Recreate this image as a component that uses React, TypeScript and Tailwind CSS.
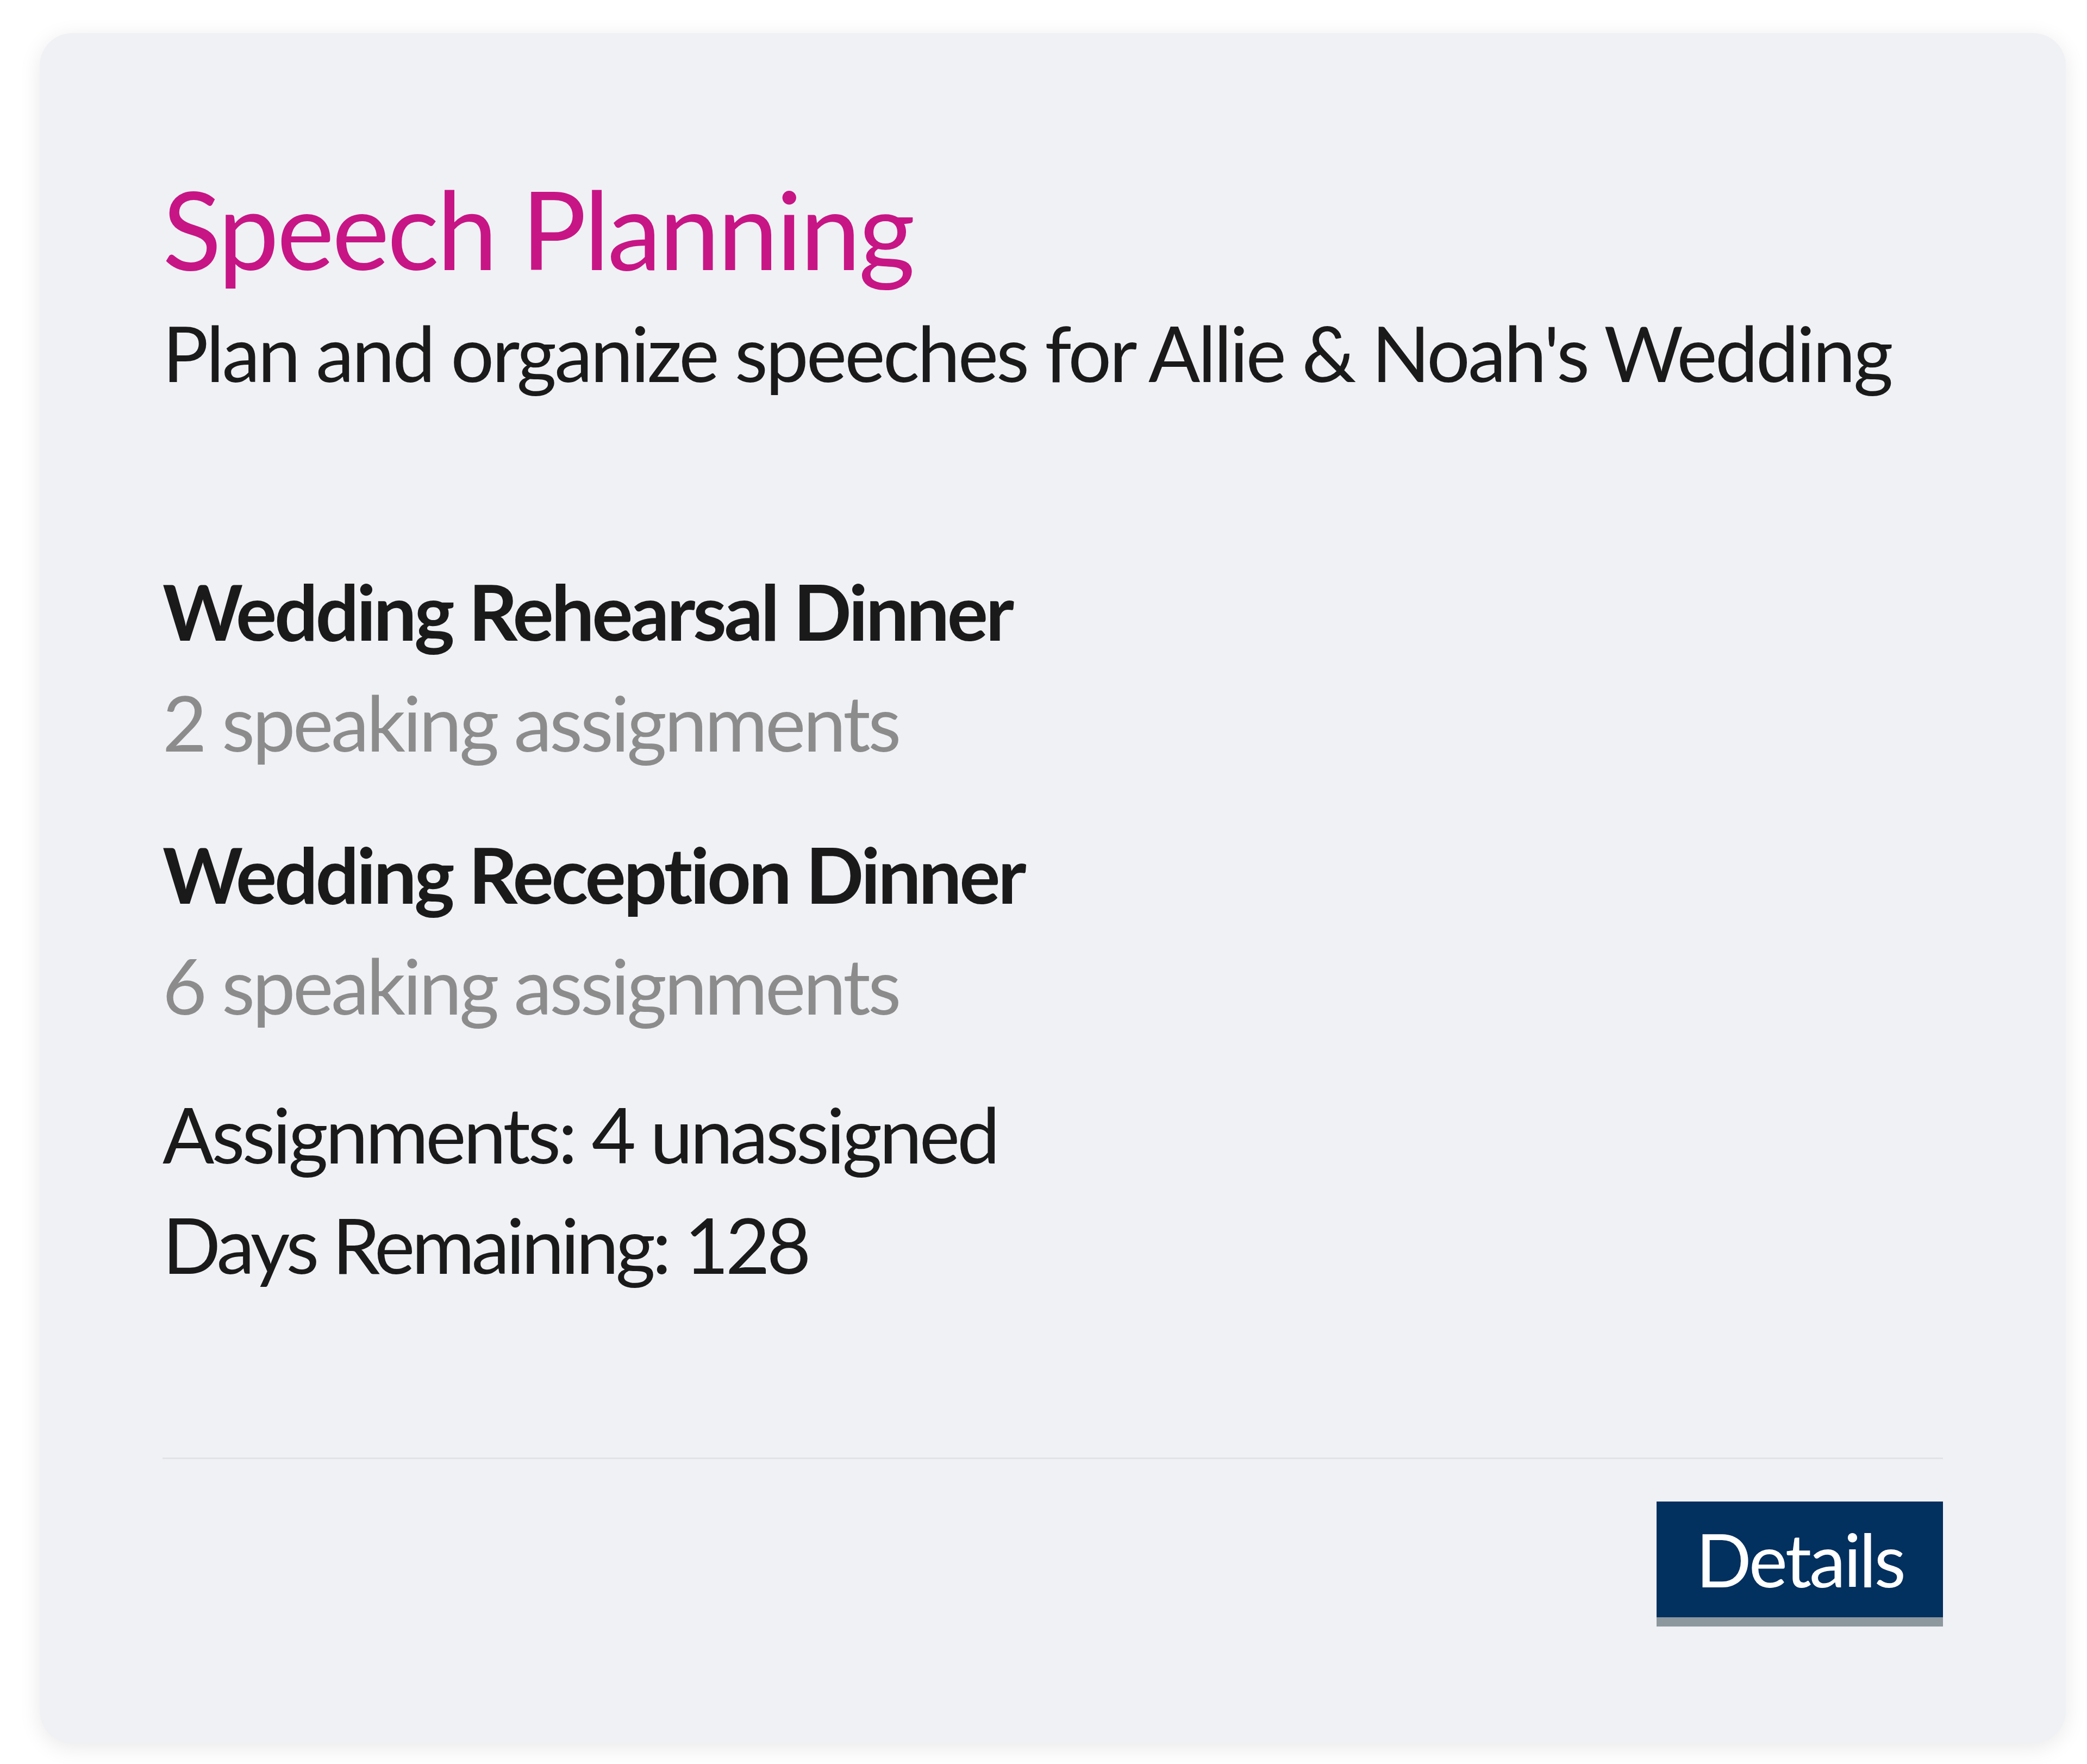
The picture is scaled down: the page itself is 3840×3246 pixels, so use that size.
import React from "react";

const events = [
  { name: "Wedding Rehearsal Dinner", count: 2 },
  { name: "Wedding Reception Dinner", count: 6 },
];

const App = () => {
  return (
    <div className="min-h-[3246px] w-full bg-white pt-[61px] pl-[73px] pr-[39px] pb-[38px] font-['Lato',sans-serif] [font-variant-ligatures:none]">
      <div className="h-[3147px] rounded-[60px] bg-[#f0f1f5] shadow-[0_8px_40px_rgba(0,0,0,0.09)] pt-[239px] px-[226px] flex flex-col">
        <h2 className="text-[200px] leading-[240px] text-[#c71585] tracking-[-4px]">
          Speech Planning
        </h2>
        <p className="mt-[7px] text-[141px] leading-[203px] text-[#1a1a1a] whitespace-nowrap tracking-[-4px]">
          Plan and organize speeches for Allie &amp; Noah's Wedding
        </p>

        <div className="mt-[272px] flex flex-col gap-[76px]">
          {events.map((e) => (
            <div key={e.name} className="flex flex-col">
              <h3 className="text-[141px] leading-[205px] font-bold text-[#1a1a1a] tracking-[-4.5px]">
                {e.name}
              </h3>
              <p className="text-[141px] leading-[203px] text-[#8c8c8c] tracking-[-4.5px]">
                {e.count} speaking assignments
              </p>
            </div>
          ))}
        </div>

        <div className="mt-[71px] text-[141px] leading-[203px] text-[#1a1a1a] tracking-[-5px]">
          <p>Assignments: 4 unassigned</p>
          <p className="tracking-[-6px]">Days Remaining: 128</p>
        </div>

        <div className="mt-[291px] border-t-[3px] border-[#e2e3e8]" />

        <div className="mt-[78px] flex justify-end">
          <button className="h-[230px] w-[527px] bg-[#02305f] border-b-[17px] border-[#8d979e] text-white text-[135px] leading-none tracking-[-4px]">
            Details
          </button>
        </div>
      </div>
    </div>
  );
};

export default App;
